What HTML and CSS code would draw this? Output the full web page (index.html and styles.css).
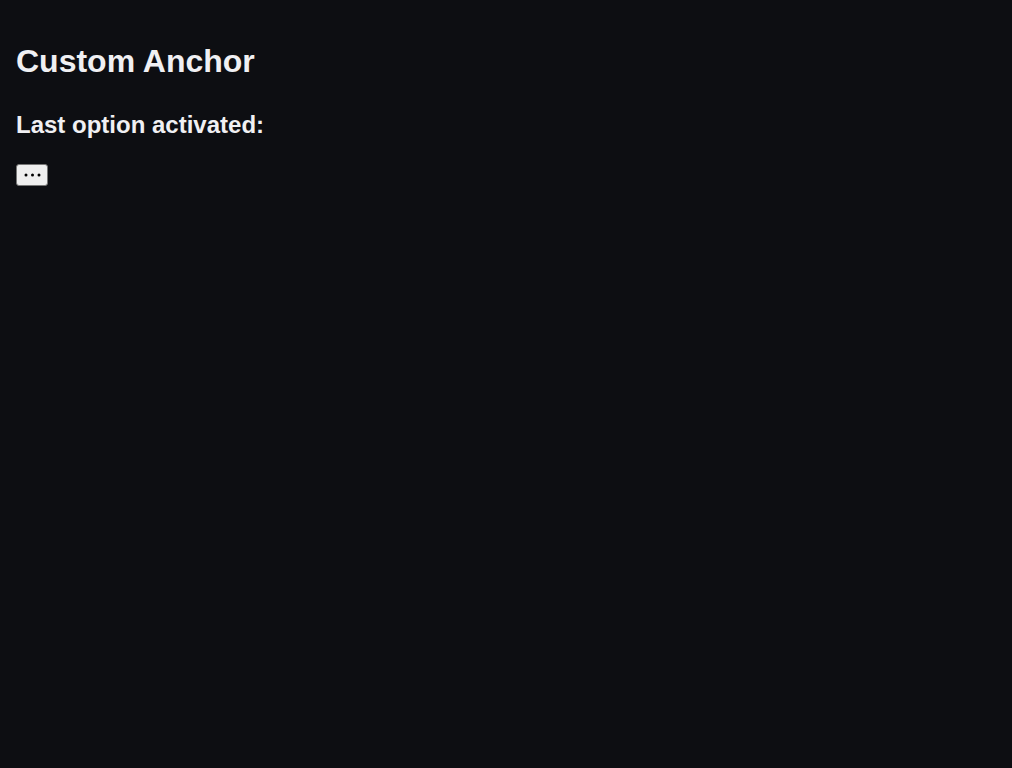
FILE: index.html
```html
<!DOCTYPE html>
<html>
<head>
<meta charset="utf-8">
<link rel="stylesheet" href="styles.css">
</head>
<body>
<main class="page">
  <h1 class="title">Custom Anchor</h1>
  <h2 class="subtitle">Last option activated:</h2>
  <button class="menu-btn" type="button" aria-label="More options">
    <svg class="dots" width="17" height="4" viewBox="0 0 17 4"><circle cx="2" cy="2" r="1.5"/><circle cx="8.5" cy="2" r="1.5"/><circle cx="15" cy="2" r="1.5"/></svg>
  </button>
</main>
</body>
</html>
```
FILE: styles.css
```css
html, body {
  margin: 0;
  background: #0d0e12;
}
body {
  font-family: "Liberation Sans", Arial, sans-serif;
  color: #f0f0f3;
}
.page {
  padding: 16px;
}
.title {
  font-size: 32px;
  font-weight: bold;
  margin: 27px 0 31px;
}
.subtitle {
  font-size: 24px;
  font-weight: bold;
  margin: 0 0 25px;
}
.menu-btn {
  display: flex;
  align-items: center;
  justify-content: center;
  width: 32px;
  height: 22px;
  padding: 0;
  background: #efefef;
  border: 1px solid #767676;
  border-radius: 3px;
}
.dots {
  fill: #000;
}
```
